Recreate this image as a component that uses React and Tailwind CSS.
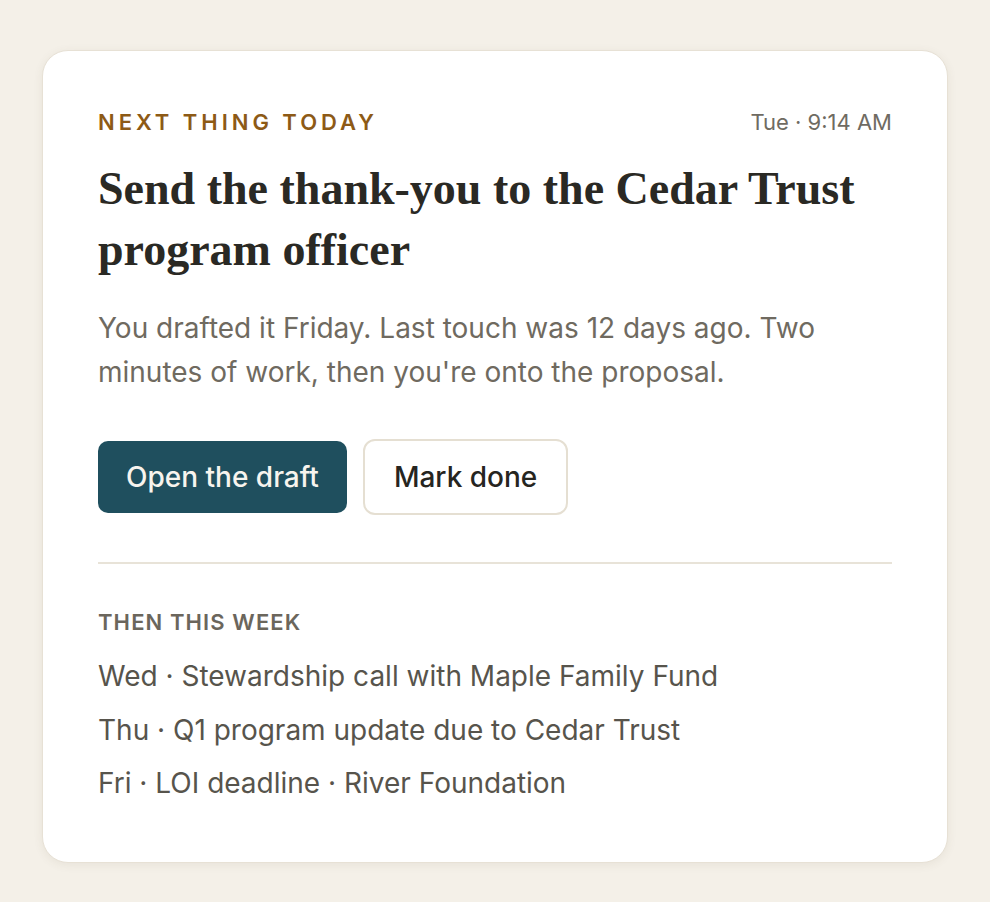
import React from 'react';

const upcoming = [
  'Wed · Stewardship call with Maple Family Fund',
  'Thu · Q1 program update due to Cedar Trust',
  'Fri · LOI deadline · River Foundation',
];

export default function App() {
  return (
    <div
      className="min-h-screen bg-[#f4f0e8] px-[42px] pt-[50px] pb-[41px]"
      style={{ fontFamily: 'Inter, "Noto Sans", sans-serif' }}
    >
      {/* Today card */}
      <div className="rounded-[26px] border-[1.5px] border-[#e7e1d5] bg-white px-[55px] pt-[57px] pb-[51px] shadow-[0_2px_10px_rgba(90,75,50,0.08)]">
        <div className="flex items-baseline justify-between">
          <span className="text-[22px] leading-[28px] font-semibold uppercase tracking-[0.18em] text-[#8d5a16]">
            Next thing today
          </span>
          <span className="text-[22px] leading-[28px] text-[#6f6b62]">Tue · 9:14 AM</span>
        </div>

        <h1
          className="mt-[22px] text-[46px] font-bold leading-[61px] text-[#2a2924]"
          style={{ fontFamily: '"Liberation Serif", "Times New Roman", serif' }}
        >
          Send the thank-you to the Cedar Trust program officer
        </h1>

        <p className="mt-[26px] text-[28px] leading-[44px] text-[#6f6a60]">
          You drafted it Friday. Last touch was 12 days ago. Two minutes of work, then you're onto the proposal.
        </p>

        <div className="mt-[45px] flex items-center gap-[16px]">
          <button className="h-[72px] rounded-[10px] bg-[#1f4f5e] px-[28px] text-[28px] font-medium text-[#f7f4ee]">
            Open the draft
          </button>
          <button className="h-[76px] rounded-[12px] border-2 border-[#e5dfd2] bg-white px-[29px] text-[28px] font-medium text-[#26251f]">
            Mark done
          </button>
        </div>

        <div className="mt-[47px] border-t-2 border-[#e8e3d8]" />

        <div className="mt-[44px] text-[22px] leading-[28px] font-semibold uppercase tracking-[0.05em] text-[#6b665c]">
          Then this week
        </div>
        <ul className="mt-[14px] flex flex-col">
          {upcoming.map((item) => (
            <li key={item} className="text-[28px] leading-[53.5px] text-[#57544c]">
              {item}
            </li>
          ))}
        </ul>
      </div>
    </div>
  );
}
